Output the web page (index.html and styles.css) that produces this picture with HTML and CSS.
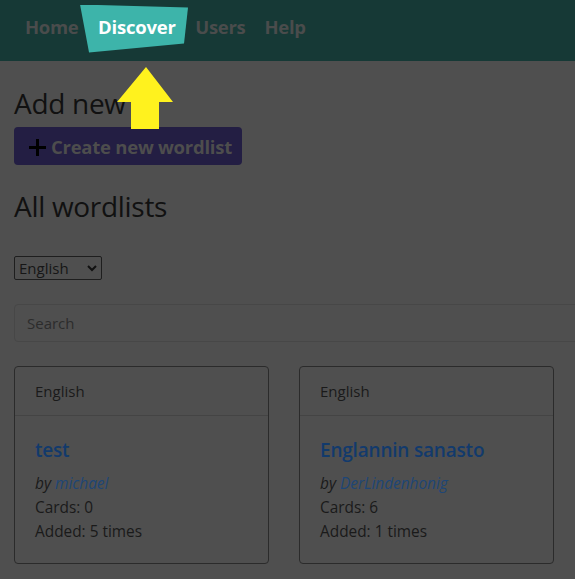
FILE: index.html
```html
<!DOCTYPE html>
<html lang="en">
<head>
<meta charset="utf-8">
<title>Wordlists</title>
<link rel="stylesheet" href="styles.css">
</head>
<body>
<nav class="navbar">
  <a class="nav-link">Home</a>
  <a class="nav-link nav-spot">Discover</a>
  <a class="nav-link">Users</a>
  <a class="nav-link">Help</a>
</nav>
<svg class="tour-arrow" width="56" height="62" viewBox="0 0 56 62"><polygon points="29,0 56,35 42,35 42,62 14,62 14,35 0,35" fill="#fff21e"/></svg>
<main class="content">
  <h2 class="heading">Add new</h2>
  <button class="btn-create"><svg class="plus" width="19" height="19" viewBox="0 0 19 19"><path d="M9.5 1v17M1 9.5h17" stroke="#000" stroke-width="3" fill="none"/></svg><span>Create new wordlist</span></button>
  <h2 class="heading heading-all">All wordlists</h2>
  <div class="lang-select"><span>English</span><svg width="10" height="7" viewBox="0 0 10 7"><path d="M1 1l4 4 4-4" stroke="#111" stroke-width="2" fill="none"/></svg></div>
  <div class="search">Search</div>
  <div class="cards">
    <div class="card">
      <div class="card-header">English</div>
      <div class="card-body">
        <div class="card-title">test</div>
        <div class="by">by <span class="author">michael</span></div>
        <div>Cards: 0</div>
        <div>Added: 5 times</div>
      </div>
    </div>
    <div class="card">
      <div class="card-header">English</div>
      <div class="card-body">
        <div class="card-title">Englannin sanasto</div>
        <div class="by">by <span class="author">DerLindenhonig</span></div>
        <div>Cards: 6</div>
        <div>Added: 1 times</div>
      </div>
    </div>
  </div>
</main>
</body>
</html>
```

FILE: styles.css
```css
html, body {
  margin: 0;
  padding: 0;
  background: #4f4f4f;
  font-family: "Open Sans", "Noto Sans", sans-serif;
  color: #1a1a1a;
  overflow: hidden;
}
.navbar {
  position: relative;
  height: 61px;
  background: #163936;
  display: flex;
  align-items: center;
  padding: 0 0 8px 15px;
  box-sizing: border-box;
}
.nav-link {
  position: relative;
  padding: 0 9.5px;
  font-size: 18.5px;
  line-height: 24px;
  font-weight: 700;
  color: #4a4c4c;
  letter-spacing: -0.3px;
}
.nav-link:first-child {
  padding-left: 10px;
}
.nav-spot {
  color: #fff;
  z-index: 1;
  padding: 0 10px;
  letter-spacing: -0.2px;
}
.nav-spot::before {
  content: "";
  position: absolute;
  left: -8px;
  top: -10px;
  width: 109px;
  height: 48px;
  background: #3db4aa;
  clip-path: polygon(0 0, 108px 3px, 104px 39px, 9px 48px);
  z-index: -1;
}
.tour-arrow {
  position: absolute;
  left: 117px;
  top: 67px;
  z-index: 2;
}
.content {
  padding: 0 14px;
}
.heading {
  margin: 0;
  font-size: 28px;
  font-weight: 500;
  line-height: 34px;
  padding-top: 25px;
  color: #111;
  letter-spacing: -0.3px;
}
.btn-create {
  margin-top: 7px;
  display: flex;
  align-items: center;
  height: 38px;
  width: 228px;
  padding: 0 0 0 14px;
  border: none;
  border-radius: 4px;
  background: #231e43;
  font-family: inherit;
  font-size: 18.5px;
  font-weight: 700;
  color: #4d4d4d;
  letter-spacing: -0.25px;
  white-space: nowrap;
}
.plus {
  margin-right: 4px;
  margin-top: 3px;
  flex: none;
}
.heading-all {
  padding-top: 24px;
}
.lang-select {
  margin-top: 33px;
  width: 88px;
  height: 24px;
  box-sizing: border-box;
  border: 1px solid #1e1e1e;
  border-radius: 2px;
  display: flex;
  align-items: center;
  justify-content: space-between;
  padding: 0 4px 0 4px;
  font-size: 15px;
  color: #161616;
}
.search {
  margin-top: 24px;
  height: 38px;
  margin-right: -40px;
  box-sizing: border-box;
  border: 1px solid #474747;
  border-radius: 4px;
  padding: 0 12px;
  display: flex;
  align-items: center;
  font-size: 15px;
  color: #2c2c2c;
}
.cards {
  margin-top: 24px;
  display: flex;
  gap: 30px;
}
.card {
  width: 255px;
  height: 198px;
  box-sizing: border-box;
  border: 1px solid #2b2b2b;
  border-radius: 4px;
}
.card-header {
  height: 49px;
  box-sizing: border-box;
  padding: 12px 20px;
  border-bottom: 1px solid #444;
  font-size: 15px;
  line-height: 24px;
  color: #1a1a1a;
}
.card-body {
  padding: 20px 20px;
  font-size: 15.4px;
  line-height: 24px;
  color: #1a1a1a;
}
.card-title {
  font-size: 19px;
  font-weight: 600;
  line-height: 28px;
  color: #123a6c;
  margin-bottom: 8px;
  letter-spacing: -0.2px;
}
.by {
  font-style: italic;
}
.author {
  color: #1e4676;
}
```
